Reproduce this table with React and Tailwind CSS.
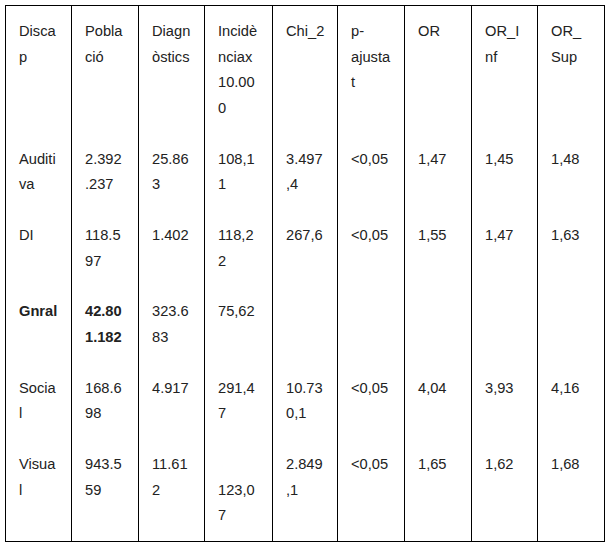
import React from "react";

const header = [
  ["Disca", "p"],
  ["Pobla", "ció"],
  ["Diagn", "òstics"],
  ["Incidè", "nciax", "10.00", "0"],
  ["Chi_2"],
  ["p-", "ajusta", "t"],
  ["OR"],
  ["OR_I", "nf"],
  ["OR_", "Sup"],
];

const rows = [
  [["Auditi", "va"], ["2.392", ".237"], ["25.86", "3"], ["108,1", "1"], ["3.497", ",4"], ["<0,05"], ["1,47"], ["1,45"], ["1,48"]],
  [["DI"], ["118.5", "97"], ["1.402"], ["118,2", "2"], ["267,6"], ["<0,05"], ["1,55"], ["1,47"], ["1,63"]],
  [["Gnral"], ["42.80", "1.182"], ["323.6", "83"], ["75,62"], [], [], [], [], []],
  [["Socia", "l"], ["168.6", "98"], ["4.917"], ["291,4", "7"], ["10.73", "0,1"], ["<0,05"], ["4,04"], ["3,93"], ["4,16"]],
  [["Visua", "l"], ["943.5", "59"], ["11.61", "2"], ["\u00a0", "123,0", "7"], ["2.849", ",1"], ["<0,05"], ["1,65"], ["1,62"], ["1,68"]],
];

function Cell({ lines, first, bold }) {
  return (
    <div
      className={
        "pt-[13px] pb-[12px] pl-[13px] whitespace-nowrap " +
        (first ? "" : "border-l border-black ") +
        (bold ? "font-bold" : "")
      }
    >
      {lines.map((l, i) => (
        <div key={i}>{l}</div>
      ))}
    </div>
  );
}

export default function App() {
  return (
    <div className="bg-white w-[610px] h-[545px] pt-[5px] pl-[5px]">
      <div
        className="w-[600px] border border-black grid grid-cols-[65px_67px_66px_68px_65px_67px_67px_66px_67px] text-[14.67px] leading-[25.67px] text-[#222]"
        style={{ fontFamily: '"Liberation Sans", Arial, sans-serif' }}
      >
        {header.map((lines, i) => (
          <Cell key={"h" + i} lines={lines} first={i === 0} />
        ))}
        {rows.map((r, ri) =>
          r.map((lines, ci) => (
            <Cell
              key={ri + "-" + ci}
              lines={lines}
              first={ci === 0}
              bold={ri === 2 && ci < 2}
            />
          ))
        )}
      </div>
    </div>
  );
}
